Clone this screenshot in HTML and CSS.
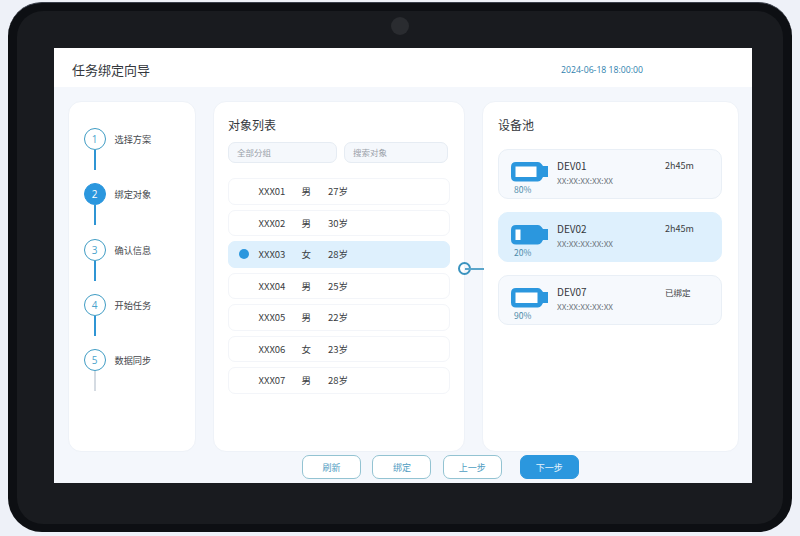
FILE: index.html
```html
<!DOCTYPE html>
<html lang="zh-CN">
<head>
  <meta charset="UTF-8" />
  <title>任务绑定向导</title>
  <link rel="stylesheet" href="styles.css">
</head>
<body>

  <div class="tablet">
    <div class="bezel">
      <div class="camera"></div>
      <div class="screen">

        <div class="top-bar">
          <div class="page-title">任务绑定向导</div>
          <div class="clock">2024-06-18 18:00:00</div>
        </div>

        <div class="panels">
          <div class="panel steps">
            <div class="step"><span class="num">1</span><span class="step-name">选择方案</span></div>
            <div class="step"><span class="num on">2</span><span class="step-name">绑定对象</span></div>
            <div class="step"><span class="num">3</span><span class="step-name">确认信息</span></div>
            <div class="step"><span class="num">4</span><span class="step-name">开始任务</span></div>
            <div class="step last"><span class="num">5</span><span class="step-name">数据同步</span></div>
          </div>

          <div class="panel list-panel">
            <h3>对象列表</h3>
            <div class="filters">
              <div class="field group">全部分组</div>
              <div class="field search">搜索对象</div>
            </div>
            <div class="rows">
              <div class="row"><span class="dot"></span><span class="code">XXX01</span><span class="sex">男</span><span>27岁</span></div>
              <div class="row"><span class="dot"></span><span class="code">XXX02</span><span class="sex">男</span><span>30岁</span></div>
              <div class="row selected"><span class="dot"></span><span class="code">XXX03</span><span class="sex">女</span><span>28岁</span></div>
              <div class="row"><span class="dot"></span><span class="code">XXX04</span><span class="sex">男</span><span>25岁</span></div>
              <div class="row"><span class="dot"></span><span class="code">XXX05</span><span class="sex">男</span><span>22岁</span></div>
              <div class="row"><span class="dot"></span><span class="code">XXX06</span><span class="sex">女</span><span>23岁</span></div>
              <div class="row"><span class="dot"></span><span class="code">XXX07</span><span class="sex">男</span><span>28岁</span></div>
            </div>
            <div class="link"><span class="link-ring"></span><span class="link-line"></span></div>
          </div>

          <div class="panel device-panel">
            <h3>设备池</h3>
            <div class="device">
              <div class="batt">
                <svg width="37" height="20" viewBox="0 0 37 20"><path class="batt-body" d="M5 0H27Q29 0 30.500 2L32 4H37V15H32L30.500 17.500Q29 19.500 27 19.500H5Q0 19.500 0 14.500V5Q0 0 5 0Z"/><rect class="batt-fill" x="4.500" y="4.500" width="21" height="10.500"/></svg>
                <span class="pct">80%</span>
              </div>
              <div class="dev-info"><div class="dev-name">DEV01</div><div class="mac">XX:XX:XX:XX:XX</div></div>
              <div class="dev-state">2h45m</div>
            </div>
            <div class="device selected">
              <div class="batt">
                <svg width="37" height="20" viewBox="0 0 37 20"><path class="batt-body" d="M5 0H27Q29 0 30.500 2L32 4H37V15H32L30.500 17.500Q29 19.500 27 19.500H5Q0 19.500 0 14.500V5Q0 0 5 0Z"/><rect class="batt-fill" x="4.500" y="4.500" width="5" height="10.500"/></svg>
                <span class="pct">20%</span>
              </div>
              <div class="dev-info"><div class="dev-name">DEV02</div><div class="mac">XX:XX:XX:XX:XX</div></div>
              <div class="dev-state">2h45m</div>
            </div>
            <div class="device">
              <div class="batt">
                <svg width="37" height="20" viewBox="0 0 37 20"><path class="batt-body" d="M5 0H27Q29 0 30.500 2L32 4H37V15H32L30.500 17.500Q29 19.500 27 19.500H5Q0 19.500 0 14.500V5Q0 0 5 0Z"/><rect class="batt-fill" x="4.500" y="4.500" width="22" height="10.500"/></svg>
                <span class="pct">90%</span>
              </div>
              <div class="dev-info"><div class="dev-name">DEV07</div><div class="mac">XX:XX:XX:XX:XX</div></div>
              <div class="dev-state bound">已绑定</div>
            </div>
          </div>
        </div>

        <div class="actions">
          <button class="btn">刷新</button>
          <button class="btn">绑定</button>
          <button class="btn">上一步</button>
          <button class="btn primary">下一步</button>
        </div>

      </div>
    </div>
  </div>

</body>
</html>
```

FILE: styles.css
```css
* { box-sizing: border-box; }
body {
  margin: 0;
  width: 800px;
  height: 536px;
  overflow: hidden;
  background: #eef1f8;
  font-family: "Noto Sans CJK SC", "Noto Sans", sans-serif;
  color: #3a3d42;
}

/* Tablet frame */
.tablet {
  margin: 2px 8px 0;
  width: 784px;
  height: 530px;
  padding: 8px 9px;
  background: #0d0f13;
  border-radius: 34px;
  border-top: 1px solid #3a3f4a;
}
.bezel {
  position: relative;
  height: 100%;
  padding: 37px 31px 41px 37px;
  background: #191b1f;
  border-radius: 26px;
}
.camera {
  position: absolute;
  top: 6px;
  left: 374px;
  width: 18px;
  height: 18px;
  border-radius: 50%;
  background: #2a2c30;
}
.screen {
  height: 100%;
  display: flex;
  flex-direction: column;
  background: #f4f7fc;
}

.top-bar {
  height: 39px;
  flex: none;
  display: flex;
  align-items: center;
  background: #fff;
  padding: 4px 0 0 18px;
}
.page-title { font-size: 13px; color: #34373c; width: 489px; }
.clock { font-family: "Open Sans", sans-serif; font-size: 8.700px; color: #2f7fae; }

.panels {
  display: flex;
  padding: 14px 0 0 14px;
  height: 365px;
  flex: none;
}
.panel {
  background: #fff;
  border: 1px solid #eef2f8;
  border-radius: 13px;
  height: 351px;
}

/* Steps */
.steps { width: 128px; padding: 26px 0 0 14.500px; margin-right: 17px; }
.step {
  position: relative;
  height: 55.250px;
  display: flex;
  align-items: flex-start;
  gap: 9px;
  font-size: 9.200px;
}
.step::after {
  content: "";
  position: absolute;
  left: 10px;
  top: 22px;
  width: 2px;
  height: 20px;
  background: #2f95d4;
}
.step.last::after { background: #d5dbe2; }
.num {
  width: 22px;
  height: 22px;
  border-radius: 50%;
  border: 1.500px solid #3f9cc4;
  color: #4aa3cc;
  display: flex;
  align-items: center;
  justify-content: center;
  font-family: "Open Sans", sans-serif;
  font-size: 10px;
}
.num.on { background: #2b97de; border-color: #2b97de; color: #fff; }
.step-name { line-height: 22px; color: #44474c; }

/* Object list */
.list-panel { position: relative; width: 252px; padding: 14px 14px 0; margin-right: 17px; }
h3 { margin: 0; font-size: 12px; font-weight: 400; line-height: 18px; color: #34373c; }
.filters { display: flex; gap: 7px; margin-top: 8px; }
.field {
  height: 21px;
  padding-left: 8px;
  border: 1px solid #e6ecf3;
  border-radius: 7px;
  background: #f5f8fc;
  font-size: 8.500px;
  line-height: 19px;
  color: #9aa1a9;
}
.field.group { width: 109px; }
.field.search { width: 104px; }
.rows { display: flex; flex-direction: column; gap: 5px; margin-top: 15px; }
.row {
  height: 26.500px;
  display: flex;
  align-items: center;
  padding-left: 9.500px;
  border: 1px solid #f3f5f9;
  border-radius: 7px;
  font-size: 9.500px;
  color: #3a3d42;
}
.dot { width: 10px; height: 10px; border-radius: 50%; margin-right: 10px; }
.code { width: 43px; }
.sex { width: 26.500px; }
.row.selected { background: #def0fd; border-color: #def0fd; }
.row.selected .dot { background: #2b97de; }

.link { position: absolute; left: 244px; top: 160px; display: flex; align-items: center; }
.link-ring { width: 13px; height: 13px; border: 2px solid #3a93bf; border-radius: 50%; }
.link-line { width: 19px; height: 2px; margin-left: -6px; background: #5aa5ca; }

/* Devices */
.device-panel { width: 257px; padding: 14px 16px 0 15px; }
.device {
  height: 50px;
  display: flex;
  padding: 11.500px 0 0 12px;
  background: #f6f9fd;
  border: 1px solid #e9eff6;
  border-radius: 10px;
}
.device + .device { margin-top: 13px; }
.device-panel h3 + .device { margin-top: 15px; }
.device.selected { background: #def0fd; border-color: #def0fd; }
.batt { width: 46px; display: flex; flex-direction: column; align-items: flex-start; }
.batt svg { display: block; }
.batt-body { fill: #2b97de; }
.batt-fill { fill: #fff; }
.pct { font-size: 8.500px; line-height: 10px; margin: 2px 0 0 3px; color: #4c8aa8; }
.dev-info { width: 108px; margin-top: -3px; }
.dev-name { font-size: 10px; line-height: 14px; color: #34373c; }
.mac { font-size: 8.200px; line-height: 13px; margin-top: 1px; color: #6f7780; }
.dev-state { font-size: 9px; line-height: 14px; margin-top: -3px; color: #3a3d42; }
.dev-state.bound { font-size: 8.500px; }

/* Bottom buttons */
.actions {
  display: flex;
  padding: 3px 0 0 248px;
  gap: 11.400px;
}
.btn {
  width: 59px;
  height: 24px;
  padding: 0;
  background: #fff;
  border: 1px solid #93c3d2;
  border-radius: 7px;
  font-family: inherit;
  font-size: 9px;
  color: #4f9dc2;
}
.btn.primary {
  margin-left: 6.500px;
  background: #2b97de;
  border-color: #2b97de;
  color: #e4f3fc;
}
```
